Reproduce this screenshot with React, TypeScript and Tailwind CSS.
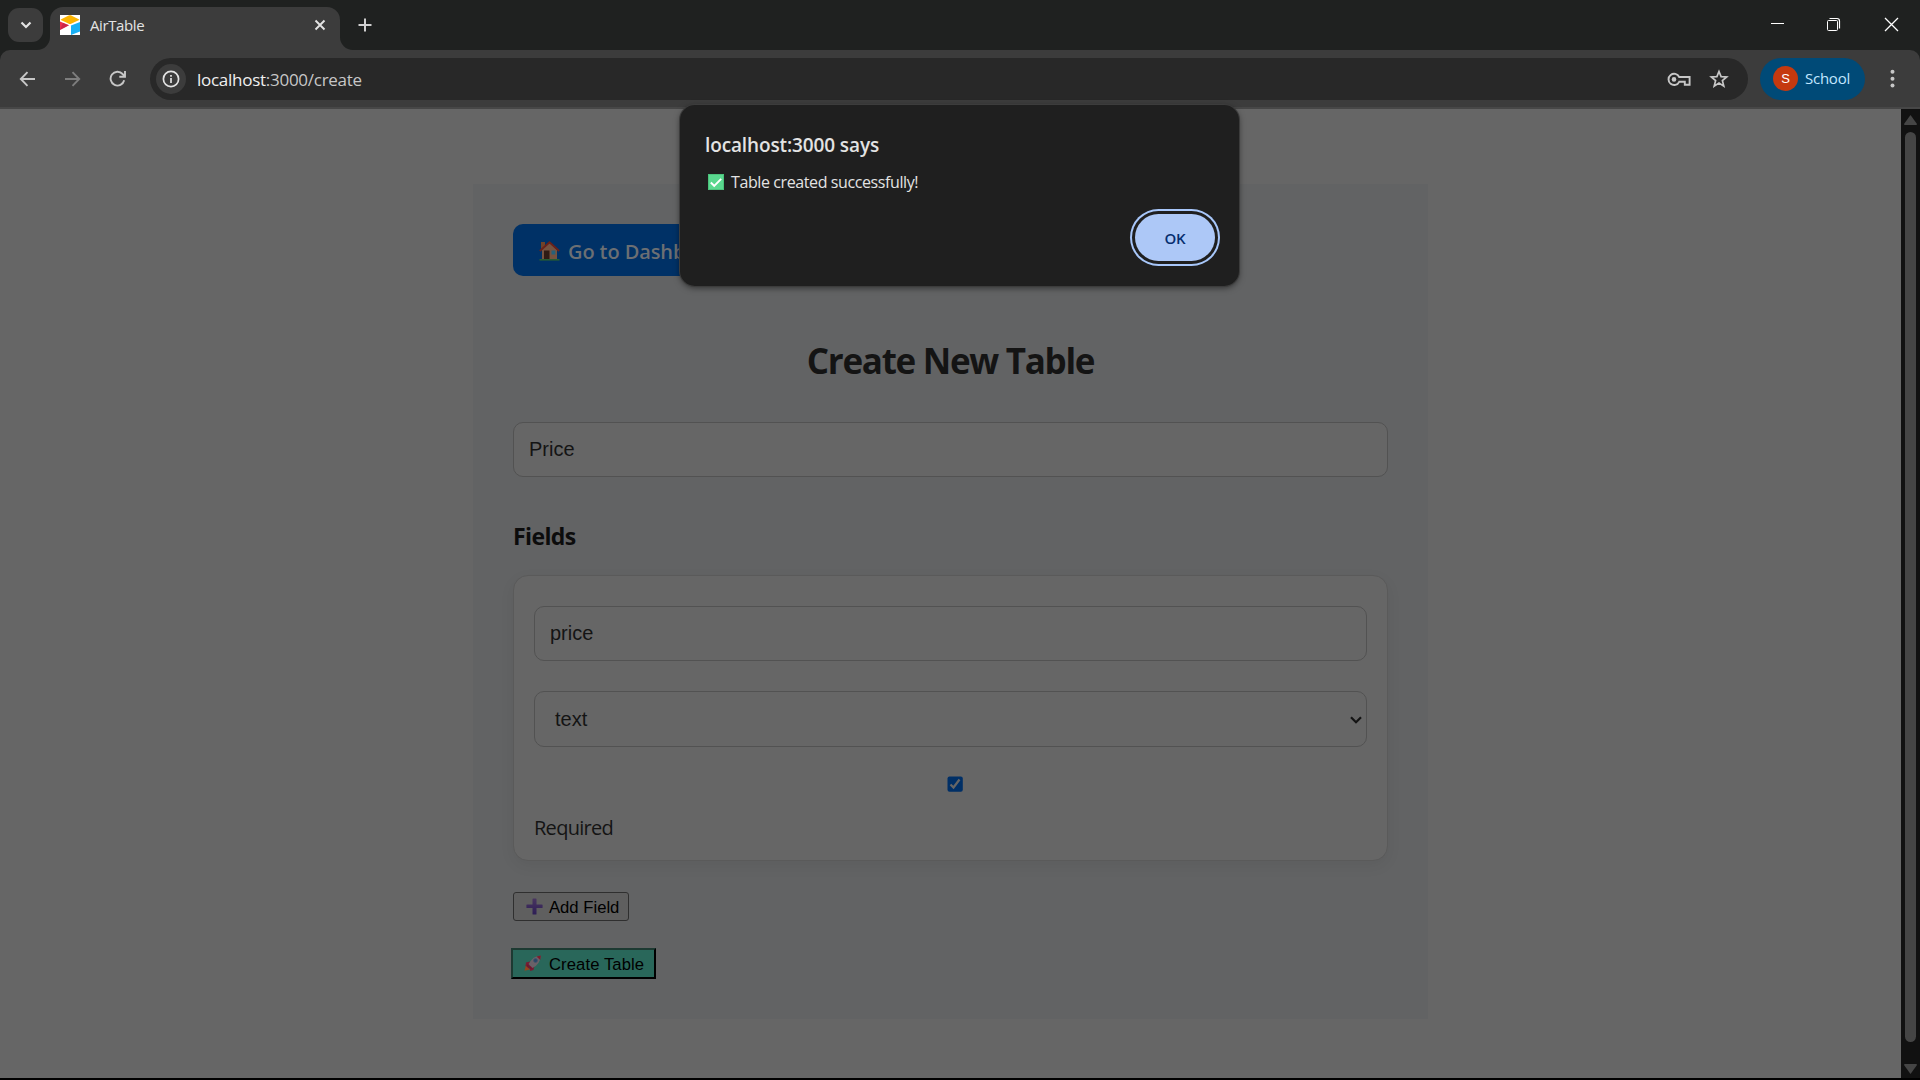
import React from "react";

const ui = "font-['Open_Sans','Noto_Sans',sans-serif]";
const arial = "font-['Liberation_Sans',Arial,sans-serif]";

function Favicon() {
  return (
    <svg width="20" height="20" viewBox="0 0 20 20" className="shrink-0">
      <rect width="20" height="20" fill="#fff" />
      <path d="M0.8 4.6 9.2 0.3h1.6L19.2 4.6v.4L10.6 8.9H9.4L0.8 5z" fill="#fcb400" />
      <path d="M11 10.6 20 7v9.6L11 20z" fill="#18b0f5" />
      <path d="M0 6.6 9 10.3 0 15z" fill="#e8304f" />
      <path d="M3 8 9 10.3 0 15z" fill="#ba1e45" opacity=".6" />
    </svg>
  );
}

function TabStrip() {
  return (
    <header className="flex h-[50px] items-start bg-[#1f2120]">
      <button className="ml-2 mt-2 flex h-[34px] w-[35px] items-center justify-center rounded-[11px] bg-[#3c3c3c]">
        <svg width="12" height="8" viewBox="0 0 12 8" fill="none" stroke="#e3e3e3" strokeWidth="2.2"><path d="M1.5 1.5 6 6l4.500-4.500" /></svg>
      </button>
      <div className="relative ml-[7px] mt-[7px] flex h-[43px] w-[290px] items-start rounded-t-[13px] bg-[#3c3c3c] pl-[10px] pr-[14px]">
        <svg className="absolute -left-[13px] bottom-0" width="13" height="13"><path d="M13 0v13H0A13 13 0 0 0 13 0z" fill="#3c3c3c" /></svg>
        <svg className="absolute -right-[13px] bottom-0" width="13" height="13"><path d="M0 0v13h13A13 13 0 0 1 0 0z" fill="#3c3c3c" /></svg>
        <div className="mt-2"><Favicon /></div>
        <span className={`${ui} ml-[10px] mt-[8px] text-[15px] leading-5 tracking-[-0.4px] whitespace-nowrap text-[#e3e3e3]`}>AirTable</span>
        <svg className="mt-[12px] ml-auto" width="12" height="12" viewBox="0 0 12 12" stroke="#e3e3e3" strokeWidth="1.9"><path d="m1.500 1.500 9 9M10.500 1.500l-9 9" /></svg>
      </div>
      <svg className="ml-[18px] mt-[18px]" width="14" height="14" viewBox="0 0 14 14" stroke="#d0d0d0" strokeWidth="2"><path d="M7 .5v13M.5 7h13" /></svg>
      <div className="ml-auto mr-[21px] mt-[17px] flex">
        <svg width="15" height="15" viewBox="0 0 15 15"><path d="M1 6.500h13" stroke="#fff" /></svg>
        <svg className="ml-[41px]" width="15" height="15" viewBox="0 0 15 15" fill="none" stroke="#fff"><path d="M3.500 1.500h7.500q2.500 0 2.500 2.500v7.500" strokeWidth="1.200" /><rect x="1.500" y="3.500" width="10" height="10" rx="1" /></svg>
        <svg className="ml-[43px]" width="15" height="15" viewBox="0 0 15 15" stroke="#fff" strokeWidth="1.300"><path d="m1 1 13 13M14 1 1 14" /></svg>
      </div>
    </header>
  );
}

function Toolbar() {
  return (
    <div className="h-[59px] bg-[#1f2120]">
      <nav className="flex h-[59px] items-start rounded-t-[10px] border-b-2 border-[#474747] bg-[#3c3c3c] pt-2">
        <div className="flex h-[41px] w-[150px] items-center pl-[19px]">
          <svg width="17" height="16" viewBox="0 0 17 16" fill="none" stroke="#c7c7c7" strokeWidth="1.900"><path d="M16 8H2M8.500 1.200 1.800 8l6.700 6.800" /></svg>
          <svg className="ml-[28px]" width="17" height="16" viewBox="0 0 17 16" fill="none" stroke="#7d7d7d" strokeWidth="1.900"><path d="M1 8h14M8.500 1.200 15.200 8l-6.700 6.800" /></svg>
          <svg className="ml-[28px]" width="18" height="17" viewBox="0 0 18 17" fill="none" stroke="#c7c7c7" strokeWidth="1.900"><path d="M15.200 10.300A6.900 6.900 0 1 1 13.600 4L15.800 6.300M16 1v5.700h-5.700" /></svg>
        </div>
        <div className="flex h-[42px] w-[1598px] items-center rounded-full bg-[#282828] pl-[6px]">
          <div className="flex h-[30px] w-[30px] items-center justify-center rounded-full bg-[#3c3c3c]">
            <svg width="18" height="18" viewBox="0 0 18 18" fill="none" stroke="#e3e3e3" strokeWidth="1.700"><circle cx="9" cy="9" r="7.600" /><path d="M9 8v5M9 5v1.700" /></svg>
          </div>
          <span className={`${ui} ml-[11px] mt-[2px] text-[17px] tracking-[-0.27px] whitespace-nowrap text-[#c7c7c7]`}><span className="text-[#f0f0f0]">localhost</span>:3000/create</span>
          <svg className="ml-auto" width="24" height="15" viewBox="0 0 24 15" fill="none" stroke="#c7c7c7" strokeWidth="1.900"><path d="M12.200 5H22.600v7.800h-4.800V9.800h-5.600A5.600 5.600 0 1 1 12.200 5z" /><circle cx="7" cy="7.400" r="2.300" fill="#c7c7c7" stroke="none" /></svg>
          <svg className="ml-[18px] mr-[19px]" width="20" height="20" viewBox="0 0 20 20" fill="none" stroke="#c7c7c7" strokeWidth="1.700"><path d="m10 2.500 2.100 5.100 5.600.4-4.300 3.600 1.400 5.500L10 14.100l-4.800 3 1.400-5.500L2.300 8l5.600-.4z" /></svg>
        </div>
        <div className="ml-3 flex h-[42px] w-[105px] items-center rounded-full bg-[#004a77] pb-px pl-[13px]">
          <span className={`${arial} flex h-[25px] w-[25px] items-center justify-center rounded-full bg-[#c5390f] text-[13px] text-white`}>S</span>
          <span className={`${ui} ml-[7px] text-[15px] tracking-[-0.25px] whitespace-nowrap text-[#c2e7ff]`}>School</span>
        </div>
        <svg className="ml-[25px] mt-[11px]" width="5" height="20" viewBox="0 0 5 20" fill="#c7c7c7"><circle cx="2.500" cy="2.800" r="2" /><circle cx="2.500" cy="9.700" r="2" /><circle cx="2.500" cy="16.600" r="2" /></svg>
      </nav>
    </div>
  );
}

function House() {
  return (
    <svg width="21" height="20" viewBox="0 0 21 20" className="mt-[2px] shrink-0">
      <path d="M2 1h4v8H2z" fill="#70432a" />
      <path d="M3 9 10.500 2 18 9v9.500H3z" fill="#765340" />
      <path d="M.8 10 10.500 1.300 20.200 10" fill="none" stroke="#6b2119" strokeWidth="1.800" />
      <rect x="5" y="9.500" width="5.500" height="9" fill="#2f1b14" />
      <rect x="12.500" y="9.500" width="3.800" height="4" fill="#27617a" />
      <path d="M.5 18h20v1.600H.5z" fill="#275c33" />
    </svg>
  );
}

function PlusEmoji() {
  return (
    <svg width="17" height="17" viewBox="0 0 17 17" className="shrink-0">
      <defs><linearGradient id="plus" x1="0" y1="0" x2="0" y2="1"><stop offset="0" stopColor="#493560" /><stop offset="1" stopColor="#2d1e55" /></linearGradient></defs>
      <path d="M6.500 1q0-.6.600-.6h2.800q.6 0 .6.600v5.500H16q.6 0 .6.600v2.400q0 .6-.6.600h-5.500V16q0 .6-.6.600H7.100q-.6 0-.6-.6v-5.900H1q-.6 0-.6-.6V7.100q0-.6.600-.6h5.500z" fill="url(#plus)" />
    </svg>
  );
}

function Rocket() {
  return (
    <svg width="18" height="17" viewBox="0 0 18 17" className="shrink-0">
      <path d="M2 10 .5 15.800 6 14.500z" fill="#94451f" />
      <path d="M6 6.500 2 7.500 1.500 11l4 .5zM10.500 10.500 9.500 15l-3.300 1-.7-5z" fill="#771c33" />
      <path d="M16.800 0.700Q9 .8 4.500 9l4 4Q16 9.500 16.800.7z" fill="#6a6168" />
      <path d="M12.500 1.500 16.900.6 16.200 5z" fill="#7c1e2e" />
      <path d="m3.500 9 5 5-3.500-.5-2.500-2z" fill="#6c1930" />
      <circle cx="11.500" cy="5.500" r="2" fill="#2a4668" stroke="#42546c" strokeWidth=".7" />
    </svg>
  );
}

function Page() {
  return (
    <main className="flex h-[969px] bg-[#666666]">
      <div className="w-[1901px] pl-[473px] pt-[75px]">
        <section className="flex h-[835px] w-[955px] flex-col bg-[#626364] px-10 pt-10">
          <button className={`${ui} flex h-[52px] w-[222px] shrink-0 items-center rounded-[10px] bg-[#003166] pl-[26px] text-[20px] font-semibold whitespace-nowrap text-[#6c6f73]`}>
            <House /><span className="ml-[8px] mt-[4px] tracking-[-0.1px]">Go to Dashboard</span>
          </button>
          <h2 className={`${ui} mt-[61px] h-[48px] text-center text-[35px] leading-[48px] font-bold tracking-[-1.3px] text-[#141414]`}>Create New Table</h2>
          <div className={`${arial} mt-[37px] flex h-[55px] w-[875px] shrink-0 items-center rounded-[10px] border border-[#525252] bg-[#666666] pl-[15px] text-[20px] text-[#141414]`}><span className="-mt-px">Price</span></div>
          <h3 className={`${ui} mt-[43px] h-[32px] text-[23px] leading-[32px] font-bold tracking-[-0.6px] text-[#0c0c0c]`}>Fields</h3>
          <div className="mt-[23px] h-[286px] w-[875px] shrink-0 rounded-[15px] border border-[#5a5a5a] bg-[#666666] px-5 pt-[30px] shadow-[0_5px_15px_rgba(0,0,0,0.06)]">
            <div className={`${arial} flex h-[55px] items-center rounded-[10px] border border-[#525252] pl-[15px] text-[20px] text-[#141414]`}><span className="-mt-px">price</span></div>
            <div className={`${arial} mt-[30px] flex h-[56px] items-center justify-between rounded-[10px] border border-[#525252] pl-5 pr-1 text-[20px] text-[#141414]`}>
              <span>text</span>
              <svg width="12" height="8" viewBox="0 0 12 8" fill="none" stroke="#141414" strokeWidth="2.200" className="mt-px"><path d="M1 1.200 6 6.200l5-5" /></svg>
            </div>
            <div className="mt-[29px] flex h-[16px] pl-[413px]">
              <svg width="16" height="16" viewBox="0 0 16 16"><rect x=".5" y=".5" width="15.300" height="15.300" rx="2" fill="#002f66" /><path d="m3.500 8.500 3 3 6-8" fill="none" stroke="#666" strokeWidth="2.200" /></svg>
            </div>
            <div className={`${ui} mt-[22px] text-[20px] leading-[28px] tracking-[-0.72px] text-[#141414]`}>Required</div>
          </div>
          <button className={`${arial} mt-[31px] flex h-[29px] w-[116px] shrink-0 items-center rounded-[3px] border border-[#2f2f2f] bg-[#5f5f5f] pl-[12px] text-[16.67px] whitespace-nowrap text-black`}>
            <PlusEmoji /><span className="ml-[6px] mt-[2px]">Add Field</span>
          </button>
          <button className={`${arial} mt-[27px] -ml-[2px] flex h-[31px] w-[145px] shrink-0 items-center border-2 border-t-[#1d3a32] border-l-[#1d3a32] border-r-black border-b-black bg-[#29675a] pl-[11px] text-[16.67px] whitespace-nowrap text-black`}>
            <Rocket /><span className="ml-[7px] mt-[2px] tracking-[0.08px]">Create Table</span>
          </button>
        </section>
      </div>
      <div className="flex w-[19px] flex-col items-center bg-[#111111] pt-[6px]">
        <svg width="13" height="10" viewBox="0 0 13 10" fill="#454545"><path d="M6.500 0 13 9q0 1-1 1H1Q0 10 0 9z" /></svg>
        <div className="mt-[7px] h-[910px] w-[11px] rounded-full bg-[#454545]" />
        <svg className="mt-[22px]" width="13" height="10" viewBox="0 0 13 10" fill="#454545"><path d="M6.500 10 13 1q0-1-1-1H1Q0 0 0 1z" /></svg>
      </div>
    </main>
  );
}

function AlertDialog() {
  return (
    <div className={`${ui} absolute left-[680px] top-[105px] h-[181px] w-[559px] rounded-[15px] bg-[#1f1f1f] pl-[25px] pr-[24px] pt-[26px] shadow-[0_0_0_1px_#3c3c3c,0_2px_6px_rgba(0,0,0,0.5)]`}>
      <h1 className="text-[19px] leading-[28px] font-semibold tracking-[-0.12px] whitespace-nowrap text-[#e3e3e3]">localhost:3000 says</h1>
      <p className="mt-[12px] flex h-[22px] items-center pl-[3px] text-[16px] tracking-[-0.4px] whitespace-nowrap text-[#e3e3e3]">
        <svg width="16" height="16" viewBox="0 0 16 16" className="-mt-[1px]"><rect width="16" height="16" fill="#4bc27b" /><rect x="1" y="1" width="14" height="14" fill="#5ad88f" /><path d="m2.800 8.500 3.400 3.300 7-7" fill="none" stroke="#fff" strokeWidth="1.900" /></svg>
        <span className="ml-[7px]">Table created successfully!</span>
      </p>
      <div className="mt-[21px] flex justify-end">
        <button className="flex h-[47px] w-[80px] items-center justify-center rounded-full bg-[#adc8f7] pt-px text-[15px] font-semibold tracking-[-0.3px] text-[#062e6f] shadow-[0_0_0_3px_#1f1f1f,0_0_0_5px_#a8c7fa]">OK</button>
      </div>
    </div>
  );
}

export default function App() {
  return (
    <div className="relative h-[1080px] w-[1920px] overflow-hidden bg-black">
      <TabStrip />
      <Toolbar />
      <Page />
      <AlertDialog />
    </div>
  );
}
